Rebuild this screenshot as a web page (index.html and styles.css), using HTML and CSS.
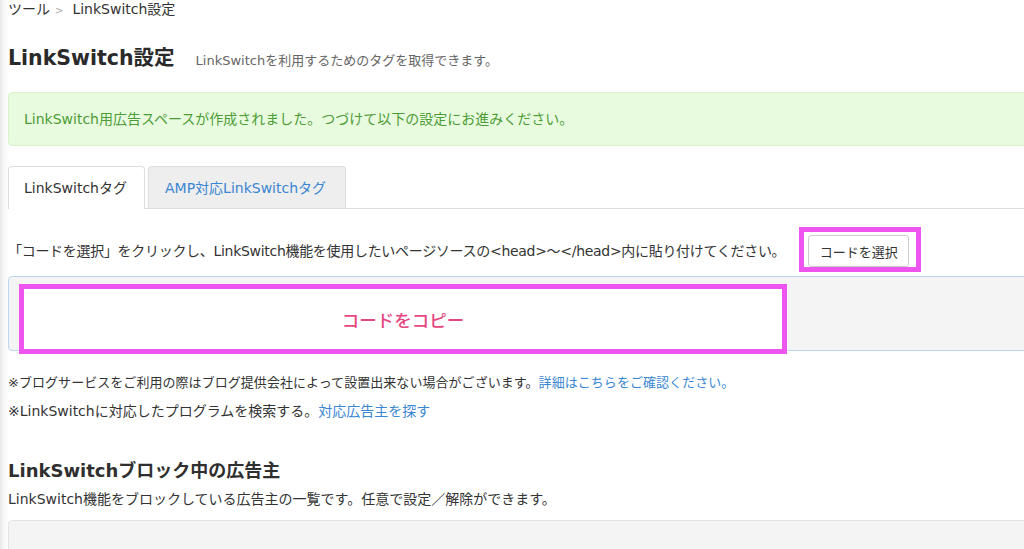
FILE: index.html
```html
<!DOCTYPE html>
<html lang="ja">
<head>
<meta charset="utf-8">
<title>LinkSwitch設定</title>
<link rel="stylesheet" href="styles.css">
</head>
<body>
<div class="page">
  <div class="breadcrumb">ツール<span class="sep">&gt;</span>LinkSwitch設定</div>

  <div class="title-row">
    <h1 class="title">LinkSwitch設定</h1>
    <span class="subtitle">LinkSwitchを利用するためのタグを取得できます。</span>
  </div>

  <div class="alert">LinkSwitch用広告スペースが作成されました。つづけて以下の設定にお進みください。</div>

  <div class="tabs">
    <div class="tab tab-active">LinkSwitchタグ</div>
    <div class="tab tab-other">AMP対応LinkSwitchタグ</div>
  </div>

  <div class="instruction">
    <span class="instruction-text">「コードを選択」をクリックし、LinkSwitch機能を使用したいページソースの&lt;head&gt;〜&lt;/head&gt;内に貼り付けてください。</span>
    <span class="highlight-btn"><button class="btn">コードを選択</button></span>
  </div>

  <div class="code-box">
    <div class="copy-overlay">コードをコピー</div>
  </div>

  <div class="notes">
    <p class="note-small">※ブログサービスをご利用の際はブログ提供会社によって設置出来ない場合がございます。<a class="link">詳細はこちらをご確認ください。</a></p>
    <p>※LinkSwitchに対応したプログラムを検索する。<a class="link">対応広告主を探す</a></p>
  </div>

  <h2 class="section-title">LinkSwitchブロック中の広告主</h2>
  <p class="section-desc">LinkSwitch機能をブロックしている広告主の一覧です。任意で設定／解除ができます。</p>
  <div class="list-box"></div>
</div>
</body>
</html>
```

FILE: styles.css
```css
html, body {
  margin: 0;
  padding: 0;
}

body {
  font-family: "DejaVu Sans", "Noto Sans CJK JP", sans-serif;
  font-size: 14px;
  color: #333;
  background: linear-gradient(to right, #e9e9e9 0, #f7f7f7 4px, #fff 9px);
  overflow: hidden;
  height: 549px;
}

.page {
  width: 1100px;
  padding-left: 8px;
}

.breadcrumb {
  height: 18px;
  line-height: 18px;
  font-size: 14px;
  color: #333;
}

.sep {
  color: #aaa;
  font-size: 10px;
  margin: 0 9px 0 5px;
}

.title-row {
  display: flex;
  align-items: baseline;
  margin-top: 25px;
}

.title {
  margin: 0;
  font-size: 20.5px;
  line-height: 30px;
  font-weight: 700;
  color: #2a2a2a;
}

.subtitle {
  margin-left: 21px;
  font-size: 13px;
  color: #666;
}

.alert {
  margin-top: 19px;
  height: 52px;
  line-height: 52px;
  padding: 0 15px;
  background: #e8fbdf;
  border: 1px solid #d9f3cc;
  border-radius: 4px;
  color: #4d9b36;
  font-size: 14px;
}

.tabs {
  display: flex;
  margin-top: 20px;
  border-bottom: 1px solid #ddd;
}

.tab {
  line-height: 20px;
  padding: 11px 15px;
  border: 1px solid #ddd;
  border-bottom: none;
  border-radius: 4px 4px 0 0;
  margin-bottom: -1px;
}

.tab-active {
  width: 105px;
  background: #fff;
  color: #333;
}

.tab-other {
  margin-left: 3px;
  width: 165px;
  padding-left: 16px;
  background: #eeeeee;
  color: #3a86d2;
  margin-bottom: 0;
  padding-bottom: 10px;
}

.instruction {
  display: flex;
  align-items: center;
  margin-top: 18px;
}

.instruction-text {
  font-size: 14px;
  letter-spacing: -0.3px;
  color: #333;
}

.highlight-btn {
  display: inline-flex;
  margin-left: 14px;
  border: 5px solid #ee55ee;
  padding: 3px 7px 0 4px;
}

.btn {
  font-family: "Noto Sans CJK JP", sans-serif;
  font-size: 13px;
  color: #333;
  background: #fff;
  border: 1px solid #ccc;
  border-radius: 3px;
  width: 101px;
  height: 32px;
  padding: 0;
}

.code-box {
  position: relative;
  margin-top: 4px;
  height: 73px;
  background: #f4f4f4;
  border: 1px solid #bcd6ef;
  border-radius: 4px;
}

.copy-overlay {
  position: absolute;
  left: 10px;
  top: 7px;
  box-sizing: border-box;
  width: 768px;
  height: 70px;
  border: 5px solid #ee55ee;
  background: #fff;
  display: flex;
  align-items: center;
  justify-content: center;
  color: #e5487f;
  font-size: 17.5px;
  font-weight: 500;
}

.notes {
  margin-top: 17px;
}

.notes p {
  margin: 0;
  line-height: 29px;
  font-size: 14px;
}

.notes .note-small {
  font-size: 13px;
  letter-spacing: 0.05px;
}

.link {
  color: #3a86d2;
}

.section-title {
  margin: 32px 0 0;
  font-size: 18px;
  line-height: 26px;
  font-weight: 700;
  color: #2f2f2f;
}

.section-desc {
  margin: 5px 0 0;
  line-height: 20px;
  font-size: 14px;
}

.list-box {
  margin-top: 11px;
  height: 80px;
  background: #f4f4f4;
  border: 1px solid #e3e3e3;
  border-radius: 4px;
}
```
